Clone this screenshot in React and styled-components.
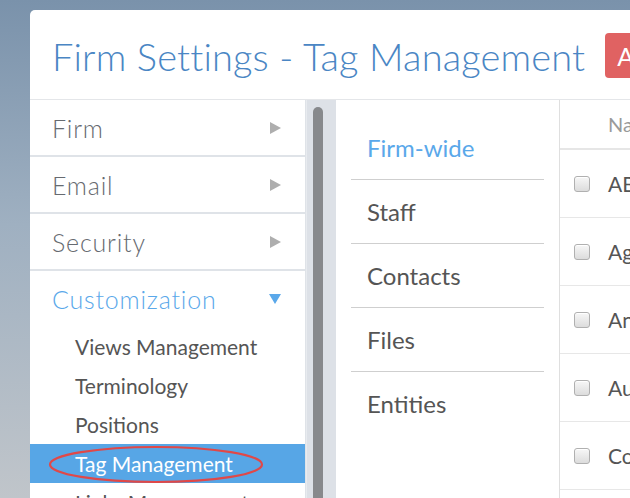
import React from 'react';
import styled, { createGlobalStyle } from 'styled-components';

const Global = createGlobalStyle`
  html, body {
    margin: 0;
    padding: 0;
    height: 100%;
    overflow: hidden;
  }
  body {
    font-family: Lato, "Open Sans", "Liberation Sans", sans-serif;
    background: linear-gradient(180deg, #7a92ab 0%, #9fb0c1 45%, #c0c5ca 100%);
  }
`;

const light = `"Lato Light", Lato, "Open Sans", "Liberation Sans", sans-serif`;

const Page = styled.div`
  width: 630px;
  height: 498px;
  overflow: hidden;
  padding: 10px 0 0 30px;
  box-sizing: border-box;
`;

const Modal = styled.div`
  width: 820px;
  height: 560px;
  background: #fff;
  border-radius: 5px 0 0 0;
  display: flex;
  flex-direction: column;
`;

const Header = styled.div`
  height: 90px;
  box-sizing: border-box;
  border-bottom: 1px solid #e4e6e9;
  display: flex;
  align-items: center;
  padding: 0 0 0 22px;
  gap: 20px;
`;

const Title = styled.h1`
  margin: 0;
  font-family: ${light};
  font-size: 38px;
  font-weight: 300;
  letter-spacing: 0.15px;
  color: #4a86c4;
  white-space: nowrap;
  padding-top: 2px;
`;

const RedButton = styled.button`
  height: 45px;
  padding: 0 16px 0 12px;
  margin-top: 2px;
  border: none;
  border-radius: 4px;
  background: #e06262;
  color: #fff;
  font-family: inherit;
  font-size: 25px;
  font-weight: 400;
`;

const Body = styled.div`
  flex: 1;
  display: grid;
  grid-template-columns: 276px 30px 224px 1fr;
  min-height: 0;
`;

const Nav = styled.div`
  display: flex;
  flex-direction: column;
  border-right: 1px solid #dfe3e8;
`;

const NavItem = styled.div`
  height: 55px;
  flex: none;
  border-bottom: 2px solid #dfe3e8;
  display: flex;
  align-items: center;
  justify-content: space-between;
  padding: 0 24px 0 22px;
  font-family: ${light};
  font-size: 25px;
  font-weight: 300;
  letter-spacing: 0.8px;
  color: ${p => (p.$active ? '#5aa8ea' : '#666a70')};
`;

const SectionHead = styled(NavItem)`
  height: 56px;
  border-bottom: none;
`;

const Arrow = styled.span`
  width: 0;
  height: 0;
  border-top: 6px solid transparent;
  border-bottom: 6px solid transparent;
  border-left: 11px solid #aeaeae;
`;

const DownArrow = styled.span`
  width: 0;
  height: 0;
  border-left: 6px solid transparent;
  border-right: 6px solid transparent;
  border-top: 10px solid #5aa8ea;
`;

const SubItem = styled.div`
  position: relative;
  height: 39px;
  flex: none;
  display: flex;
  align-items: center;
  padding-left: 45px;
  font-size: 21px;
  font-weight: 400;
  color: ${p => (p.$selected ? '#fff' : '#555')};
  background: ${p => (p.$selected ? '#57a6e6' : 'transparent')};
`;

const Circle = styled.svg`
  position: absolute;
  left: 19px;
  top: 2px;
  overflow: visible;
`;

const ScrollTrack = styled.div`
  background: #dde1e7;
  border-left: 1px solid #e8ebef;
  padding: 7px 12px 0 6px;
  display: flex;
`;

const ScrollThumb = styled.div`
  width: 10px;
  height: 600px;
  border-radius: 5px 5px 0 0;
  background: #87898c;
`;

const Tabs = styled.div`
  padding: 16px 15px 0 15px;
  display: flex;
  flex-direction: column;
  border-right: 1px solid #dfdfdf;
`;

const Tab = styled.div`
  height: 63px;
  flex: none;
  display: flex;
  align-items: center;
  padding-left: 16px;
  font-size: 24px;
  font-weight: 400;
  color: ${p => (p.$active ? '#5aa8ea' : '#555')};
  border-bottom: ${p => (p.$last ? 'none' : '1px solid #cfcfcf')};
`;

const Table = styled.div`
  display: flex;
  flex-direction: column;
`;

const HeadRow = styled.div`
  height: 48px;
  flex: none;
  display: flex;
  align-items: center;
  padding-left: 48px;
  font-size: 20px;
  color: #9a9a9a;
  border-bottom: 2px solid #e6e6e6;
`;

const Row = styled.div`
  height: 67px;
  flex: none;
  display: flex;
  align-items: center;
  gap: 18px;
  padding-left: 14px;
  font-size: 21px;
  color: #555;
  border-bottom: 1px solid #e7e7e7;
`;

const Check = styled.span`
  width: 14px;
  height: 14px;
  border: 1px solid #b0b0b0;
  border-radius: 3px;
  background: linear-gradient(180deg, #f7f7f7 0%, #dcdcdc 100%);
  box-shadow: inset 0 1px 0 #fff;
`;

const navItems = ['Firm', 'Email', 'Security'];
const subItems = ['Views Management', 'Terminology', 'Positions', 'Tag Management', 'Links Management'];
const tabs = ['Firm-wide', 'Staff', 'Contacts', 'Files', 'Entities'];
const rows = ['ABC Tag', 'Agency', 'Annual', 'Audit', 'Compliance', 'Default'];

export default function App() {
  return (
    <>
      <Global />
      <Page>
        <Modal>
          <Header>
            <Title>Firm Settings - Tag Management</Title>
            <RedButton>Add</RedButton>
          </Header>
          <Body>
            <Nav>
              {navItems.map(n => (
                <NavItem key={n}>
                  {n}
                  <Arrow />
                </NavItem>
              ))}
              <SectionHead $active>
                Customization
                <DownArrow />
              </SectionHead>
              {subItems.map(s => (
                <SubItem key={s} $selected={s === 'Tag Management'}>
                  {s}
                  {s === 'Tag Management' && (
                    <Circle width="214" height="37" viewBox="0 0 214 37">
                      <ellipse cx="107" cy="18.5" rx="106" ry="17.5" fill="none" stroke="#e04848" strokeWidth="2.2" />
                    </Circle>
                  )}
                </SubItem>
              ))}
            </Nav>
            <ScrollTrack>
              <ScrollThumb />
            </ScrollTrack>
            <Tabs>
              {tabs.map((t, i) => (
                <Tab key={t} $active={i === 0} $last={i === tabs.length - 1}>
                  {t}
                </Tab>
              ))}
            </Tabs>
            <Table>
              <HeadRow>Name</HeadRow>
              {rows.map(r => (
                <Row key={r}>
                  <Check />
                  {r}
                </Row>
              ))}
            </Table>
          </Body>
        </Modal>
      </Page>
    </>
  );
}
